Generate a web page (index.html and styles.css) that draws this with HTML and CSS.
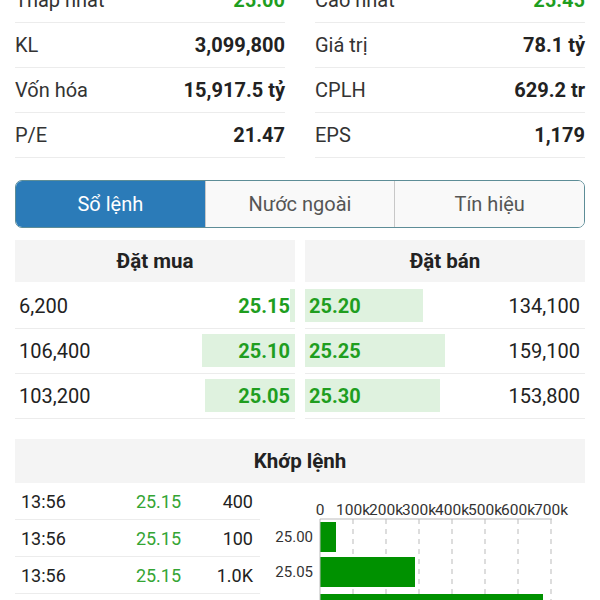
FILE: index.html
```html
<!DOCTYPE html>
<html lang="vi">
<head>
  <meta charset="UTF-8" />
  <meta name="viewport" content="width=device-width, initial-scale=1.0" />
  <title>Chi tiết cổ phiếu</title>
  <link rel="stylesheet" href="styles.css">
</head>
<body>
  <div class="page">
    <div class="stats">
      <div class="stat"><span class="label">Thấp nhất</span><span class="value up">25.00</span></div>
      <div class="stat"><span class="label">Cao nhất</span><span class="value up">25.45</span></div>
      <div class="stat"><span class="label">KL</span><span class="value">3,099,800</span></div>
      <div class="stat"><span class="label">Giá trị</span><span class="value">78.1 tỷ</span></div>
      <div class="stat"><span class="label">Vốn hóa</span><span class="value">15,917.5 tỷ</span></div>
      <div class="stat"><span class="label">CPLH</span><span class="value">629.2 tr</span></div>
      <div class="stat"><span class="label">P/E</span><span class="value">21.47</span></div>
      <div class="stat"><span class="label">EPS</span><span class="value">1,179</span></div>
    </div>

    <div class="tabs">
      <div class="tab active">Sổ lệnh</div>
      <div class="tab">Nước ngoài</div>
      <div class="tab">Tín hiệu</div>
    </div>

    <div class="book">
      <div class="side buy">
        <div class="side-head">Đặt mua</div>
        <div class="order"><span class="bar" style="width: 5px"></span><span class="vol">6,200</span><span class="price">25.15</span></div>
        <div class="order"><span class="bar" style="width: 93px"></span><span class="vol">106,400</span><span class="price">25.10</span></div>
        <div class="order"><span class="bar" style="width: 90px"></span><span class="vol">103,200</span><span class="price">25.05</span></div>
      </div>
      <div class="side sell">
        <div class="side-head">Đặt bán</div>
        <div class="order"><span class="bar" style="width: 118px"></span><span class="price">25.20</span><span class="vol">134,100</span></div>
        <div class="order"><span class="bar" style="width: 140px"></span><span class="price">25.25</span><span class="vol">159,100</span></div>
        <div class="order"><span class="bar" style="width: 135px"></span><span class="price">25.30</span><span class="vol">153,800</span></div>
      </div>
    </div>

    <div class="match-head">Khớp lệnh</div>
    <div class="match">
      <div class="trades">
        <div class="trade"><span class="time">13:56</span><span class="tprice">25.15</span><span class="tvol">400</span></div>
        <div class="trade"><span class="time">13:56</span><span class="tprice">25.15</span><span class="tvol">100</span></div>
        <div class="trade"><span class="time">13:56</span><span class="tprice">25.15</span><span class="tvol">1.0K</span></div>
      </div>
      <svg class="chart" width="325" height="140" viewBox="0 0 325 140">
        <g class="ticks" text-anchor="middle">
          <text x="60" y="32">0</text>
          <text x="93" y="32">100k</text>
          <text x="126" y="32">200k</text>
          <text x="159" y="32">300k</text>
          <text x="192" y="32">400k</text>
          <text x="225" y="32">500k</text>
          <text x="258" y="32">600k</text>
          <text x="291" y="32">700k</text>
        </g>
        <line x1="60" y1="36" x2="292" y2="36" class="axis" />
        <g class="grid">
          <line x1="93" y1="36" x2="93" y2="140" />
          <line x1="126" y1="36" x2="126" y2="140" />
          <line x1="159" y1="36" x2="159" y2="140" />
          <line x1="192" y1="36" x2="192" y2="140" />
          <line x1="225" y1="36" x2="225" y2="140" />
          <line x1="258" y1="36" x2="258" y2="140" />
          <line x1="291" y1="36" x2="291" y2="140" />
        </g>
        <rect x="60" y="39" width="16" height="30" class="vbar" />
        <rect x="60" y="74" width="95" height="30" class="vbar" />
        <rect x="60" y="111" width="223" height="30" class="vbar" />
        <line x1="60" y1="36" x2="60" y2="140" class="axis" />
        <g class="ylabels" text-anchor="end">
          <text x="53" y="59">25.00</text>
          <text x="53" y="94">25.05</text>
        </g>
      </svg>
    </div>
  </div>
</body>
</html>
```

FILE: styles.css
```css
:root {
  --green: #1f9e1f;
  --green-soft: #34a534;
  --bar: #dff2df;
  --dark: #222;
  --text: #333;
  --line: #ececec;
  --head: #f4f4f4;
  --blue: #2b7bb8;
}

* {
  box-sizing: border-box;
}

body {
  margin: 0;
  font-family: Roboto, "Noto Sans", sans-serif;
  color: var(--text);
  background: #fff;
  overflow: hidden;
}

.page {
  padding: 0 15px;
  margin-top: -22px;
}

/* thông tin chung */
.stats {
  display: grid;
  grid-template-columns: 1fr 1fr;
  column-gap: 30px;
}

.stat {
  display: flex;
  justify-content: space-between;
  align-items: center;
  height: 45px;
  border-bottom: 1px solid var(--line);
  font-size: 20px;
}

.stat .label {
  color: var(--text);
}

.stat .value {
  font-weight: 700;
  color: var(--dark);
}

.stat .value.up {
  color: var(--green);
}

/* tabs */
.tabs {
  display: flex;
  margin-top: 22px;
  height: 48px;
  border: 1.5px solid #5d8d97;
  border-radius: 7px;
  overflow: hidden;
}

.tab {
  flex: 1;
  display: flex;
  align-items: center;
  justify-content: center;
  font-size: 20px;
  color: #555;
  background: #f9f9f9;
}

.tab + .tab {
  border-left: 1px solid #c8c8c8;
}

.tab.active {
  background: var(--blue);
  color: #fff;
}

/* so lenh */
.book {
  display: grid;
  grid-template-columns: 1fr 1fr;
  column-gap: 10px;
  margin-top: 12px;
}

.side-head {
  height: 42px;
  margin-bottom: 2px;
  display: flex;
  align-items: center;
  justify-content: center;
  background: var(--head);
  font-size: 20.5px;
  font-weight: 700;
  color: var(--dark);
}

.order {
  position: relative;
  display: flex;
  justify-content: space-between;
  align-items: center;
  height: 45px;
  border-bottom: 1px solid var(--line);
  font-size: 20px;
}

.order .bar {
  position: absolute;
  top: 5px;
  bottom: 6px;
  background: var(--bar);
}

.buy .bar {
  right: 0;
}

.sell .bar {
  left: 0;
}

.order .vol,
.order .price {
  position: relative;
}

.order .vol {
  color: var(--dark);
}

.order .price {
  font-weight: 700;
  color: var(--green);
}

.buy .order,
.sell .order {
  padding: 0 5px 0 4px;
}

/* khop lenh */
.match-head {
  margin-top: 20px;
  height: 44px;
  display: flex;
  align-items: center;
  justify-content: center;
  background: var(--head);
  font-size: 20.5px;
  font-weight: 700;
  color: var(--dark);
}

.match {
  display: flex;
  align-items: flex-start;
}

.trades {
  width: 245px;
}

.trade {
  display: grid;
  grid-template-columns: 90px 95px 1fr;
  align-items: center;
  height: 37px;
  padding: 0 7px 0 6px;
  border-bottom: 1px solid var(--line);
  font-size: 18px;
  color: var(--dark);
}

.trade .tprice {
  color: var(--green-soft);
  text-align: center;
}

.trade .tvol {
  text-align: right;
}

.chart {
  display: block;
}

.chart text {
  font-family: Roboto, "Noto Sans", sans-serif;
  font-size: 15.5px;
  fill: var(--text);
}

.chart .ylabels text {
  font-size: 15px;
}

.chart .axis {
  stroke: #bbb;
  stroke-width: 1;
}

.chart .grid line {
  stroke: #bbb;
  stroke-width: 1;
  stroke-dasharray: 5 5;
}

.chart .vbar {
  fill: #009100;
}
```
